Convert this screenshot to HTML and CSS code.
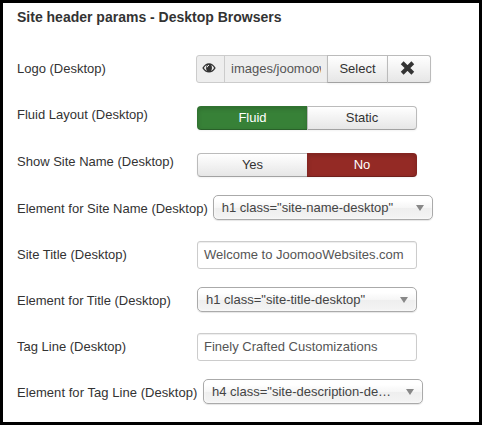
FILE: index.html
```html
<!DOCTYPE html>
<html lang="en">
<head>
<meta charset="utf-8">
<title>Site header params</title>
<link rel="stylesheet" href="styles.css">
</head>
<body>
<main class="panel">
  <h1 class="heading">Site header params - Desktop Browsers</h1>
  <div class="row">
    <div class="label">Logo (Desktop)</div>
    <div class="media">
      <span class="preview"><svg width="14" height="12" viewBox="0 0 14 12"><path d="M.3 6Q3 1.2 7 1.2T13.7 6Q11 10.5 7 10.5T.3 6Z" fill="#333"/><path d="M1.9 6.1Q2.8 4 4.7 3Q3.2 6.7 5.1 8.9Q3 8 1.9 6.1ZM12.1 6.1Q11.2 4 9.3 3Q10.8 6.7 8.9 8.9Q11 8 12.1 6.1Z" fill="#eee"/><path d="M5.1 5.3Q5.3 3.5 7 3.2" fill="none" stroke="#eee" stroke-width="1"/></svg></span>
      <span class="path">images/joomoow</span>
      <span class="btn select-btn">Select</span>
      <span class="btn clear-btn"><svg width="15" height="14" viewBox="0 0 15 14"><path d="M2.2 1.8L12.8 12.2M12.8 1.8L2.2 12.2" stroke="#333" stroke-width="4"/></svg></span>
    </div>
  </div>
  <div class="row">
    <div class="label">Fluid Layout (Desktop)</div>
    <div class="toggle"><span class="btn on">Fluid</span><span class="btn">Static</span></div>
  </div>
  <div class="row row-tall">
    <div class="label label-low">Show Site Name (Desktop)</div>
    <div class="toggle toggle-low"><span class="btn">Yes</span><span class="btn off">No</span></div>
  </div>
  <div class="row">
    <div class="label">Element for Site Name (Desktop)</div>
    <div class="dropdown"><span>h1 class="site-name-desktop"</span><i class="arrow"></i></div>
  </div>
  <div class="row">
    <div class="label">Site Title (Desktop)</div>
    <div class="field">Welcome to JoomooWebsites.com</div>
  </div>
  <div class="row">
    <div class="label">Element for Title (Desktop)</div>
    <div class="dropdown"><span>h1 class="site-title-desktop"</span><i class="arrow"></i></div>
  </div>
  <div class="row">
    <div class="label">Tag Line (Desktop)</div>
    <div class="field">Finely Crafted Customizations</div>
  </div>
  <div class="row">
    <div class="label label-wide">Element for Tag Line (Desktop)</div>
    <div class="dropdown"><span>h4 class="site-description-de…</span><i class="arrow"></i></div>
  </div>
</main>
</body>
</html>
```
FILE: styles.css
```css
* { box-sizing: border-box; }
body {
  margin: 0;
  background: #fff;
  color: #333;
  font: 13px/18px "Liberation Sans", Arial, sans-serif;
}
.panel {
  height: 425px;
  border: 3px solid #000;
  padding: 5px 14px 0;
  overflow: hidden;
}
.heading {
  margin: 0 0 29px;
  font-size: 14px;
  line-height: 18px;
  font-weight: bold;
}
.row { display: flex; align-items: flex-start; height: 46px; }
.row-tall { height: 48px; }
.label {
  flex: none;
  min-width: 180px;
  padding: 5px 5px 0 0;
  white-space: nowrap;
}
.label-low { padding-top: 6px; }
.label-wide { width: 186px; letter-spacing: .05px; }
.btn {
  display: flex;
  align-items: center;
  justify-content: center;
  border: 1px solid #bbb;
  border-bottom-color: #a2a2a2;
  background: linear-gradient(#fff, #e6e6e6);
  box-shadow: inset 0 1px 0 rgba(255, 255, 255, .2), 0 1px 2px rgba(0, 0, 0, .05);
}
.media { display: flex; height: 28px; margin-left: -1px; }
.preview {
  display: flex;
  align-items: center;
  justify-content: center;
  width: 29px;
  padding: 0 3px 3px 0;
  border: 1px solid #ccc;
  border-radius: 3px 0 0 3px;
  background: #eee;
}
.path {
  width: 103px;
  margin-left: -1px;
  padding: 4px 6px;
  border: 1px solid #ccc;
  border-right: 0;
  background: #eee;
  color: #555;
  overflow: clip;
  overflow-clip-margin: content-box;
  white-space: nowrap;
}
.select-btn { width: 61px; }
.clear-btn { width: 44px; margin-left: -1px; padding: 0 3px 2px 0; border-radius: 0 3px 3px 0; }
.toggle { display: flex; width: 220px; height: 24px; margin-top: 5px; }
.toggle-low { margin-top: 6px; }
.toggle .btn { width: 110px; }
.toggle .btn:first-child { border-right-width: 0; border-radius: 4px 0 0 4px; }
.toggle .btn:last-child { border-radius: 0 4px 4px 0; }
.toggle .btn.on, .toggle .btn.off {
  color: #fff;
  border-color: rgba(0, 0, 0, .1) rgba(0, 0, 0, .1) rgba(0, 0, 0, .25);
  box-shadow: inset 0 2px 4px rgba(0, 0, 0, .15), 0 1px 2px rgba(0, 0, 0, .05);
}
.toggle .btn.on { background: #378137; }
.toggle .btn.off { background: #942a25; }
.field {
  width: 220px;
  height: 28px;
  padding: 4px 6px;
  border: 1px solid #ccc;
  border-radius: 3px;
  box-shadow: inset 0 1px 1px rgba(0, 0, 0, .075);
  color: #555;
  white-space: nowrap;
}
.dropdown {
  display: flex;
  align-items: center;
  justify-content: space-between;
  width: 220px;
  height: 25px;
  padding: 0 8px;
  border: 1px solid #aaa;
  border-radius: 5px;
  background: linear-gradient(#fff 20%, #f6f6f6 50%, #eee 52%, #f4f4f4 100%);
  box-shadow: inset 0 0 3px #fff, 0 1px 1px rgba(0, 0, 0, .1);
  color: #444;
  white-space: nowrap;
}
.arrow {
  border: solid transparent;
  border-width: 6px 4px 0;
  border-top-color: #888;
}
```
